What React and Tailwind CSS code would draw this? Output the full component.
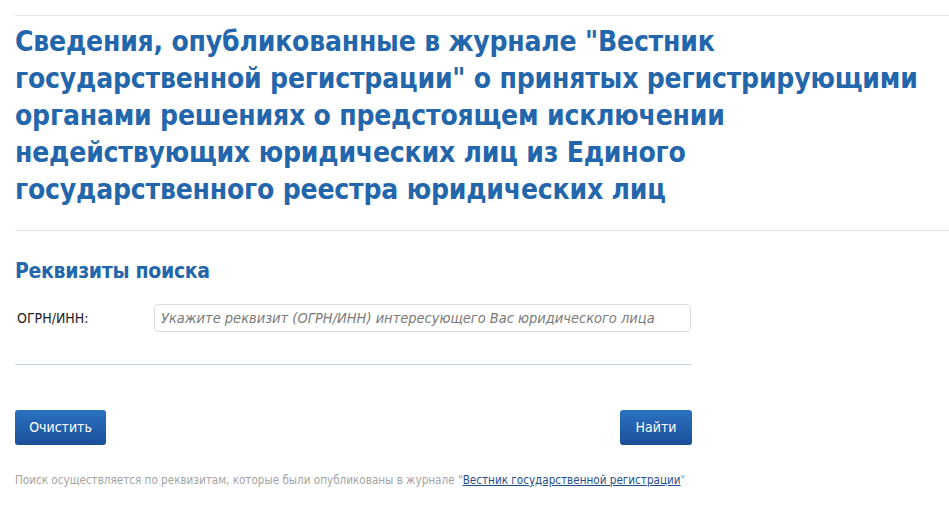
import React, { useState } from 'react';

const font = { fontFamily: '"Liberation Sans Narrow", "DejaVu Sans Condensed", "Liberation Sans", sans-serif' };

const App = () => {
    const [query, setQuery] = useState('');

    return (
        <div className="min-h-screen bg-white pl-[15px] pt-[15px]" style={font}>
            <div className="border-t border-[#e4e4e4]" />

            <h1 className="mt-[7px] whitespace-nowrap text-[28px] leading-[37px] font-bold text-[#2466ab] tracking-[-0.2px]">
                Сведения, опубликованные в журнале "Вестник<br />
                государственной регистрации" о принятых регистрирующими<br />
                органами решениях о предстоящем исключении<br />
                недействующих юридических лиц из Единого<br />
                государственного реестра юридических лиц
            </h1>

            <div className="mt-[22px] border-t border-[#e4e4e4]" />

            <div className="w-[677px]">
                <h2 className="mt-[27px] text-[21px] leading-[26px] font-bold text-[#2466ab] tracking-[-0.3px]">Реквизиты поиска</h2>

                <div className="mt-[20px] flex items-center">
                    <label className="w-[139px] pl-[2px] text-[14px] text-[#222]">ОГРН/ИНН:</label>
                    <input
                        type="text"
                        value={query}
                        onChange={(e) => setQuery(e.target.value)}
                        placeholder="Укажите реквизит (ОГРН/ИНН) интересующего Вас юридического лица"
                        className="h-[28px] w-[537px] rounded-[4px] border border-[#dcdcdc] px-[6px] text-[14.5px] italic placeholder:text-[#7a7a7a] focus:outline-none"
                    />
                </div>

                <div className="mt-[32px] border-t border-[#c9d6dc]" />

                <div className="mt-[45px] flex justify-between">
                    <button className="h-[35px] w-[91px] rounded-[3px] bg-gradient-to-b from-[#2b72c2] to-[#1b4f99] text-[14px] text-white">
                        Очистить
                    </button>
                    <button className="h-[35px] w-[72px] rounded-[3px] bg-gradient-to-b from-[#2b72c2] to-[#1b4f99] text-[14px] text-white">
                        Найти
                    </button>
                </div>
            </div>

            <p className="mt-[27px] text-[11.6px] text-[#a3a3a3]">
                Поиск осуществляется по реквизитам, которые были опубликованы в журнале "
                <a href="#" className="text-[#1f4f8f] underline">Вестник государственной регистрации</a>"
            </p>
        </div>
    );
};

export default App;
